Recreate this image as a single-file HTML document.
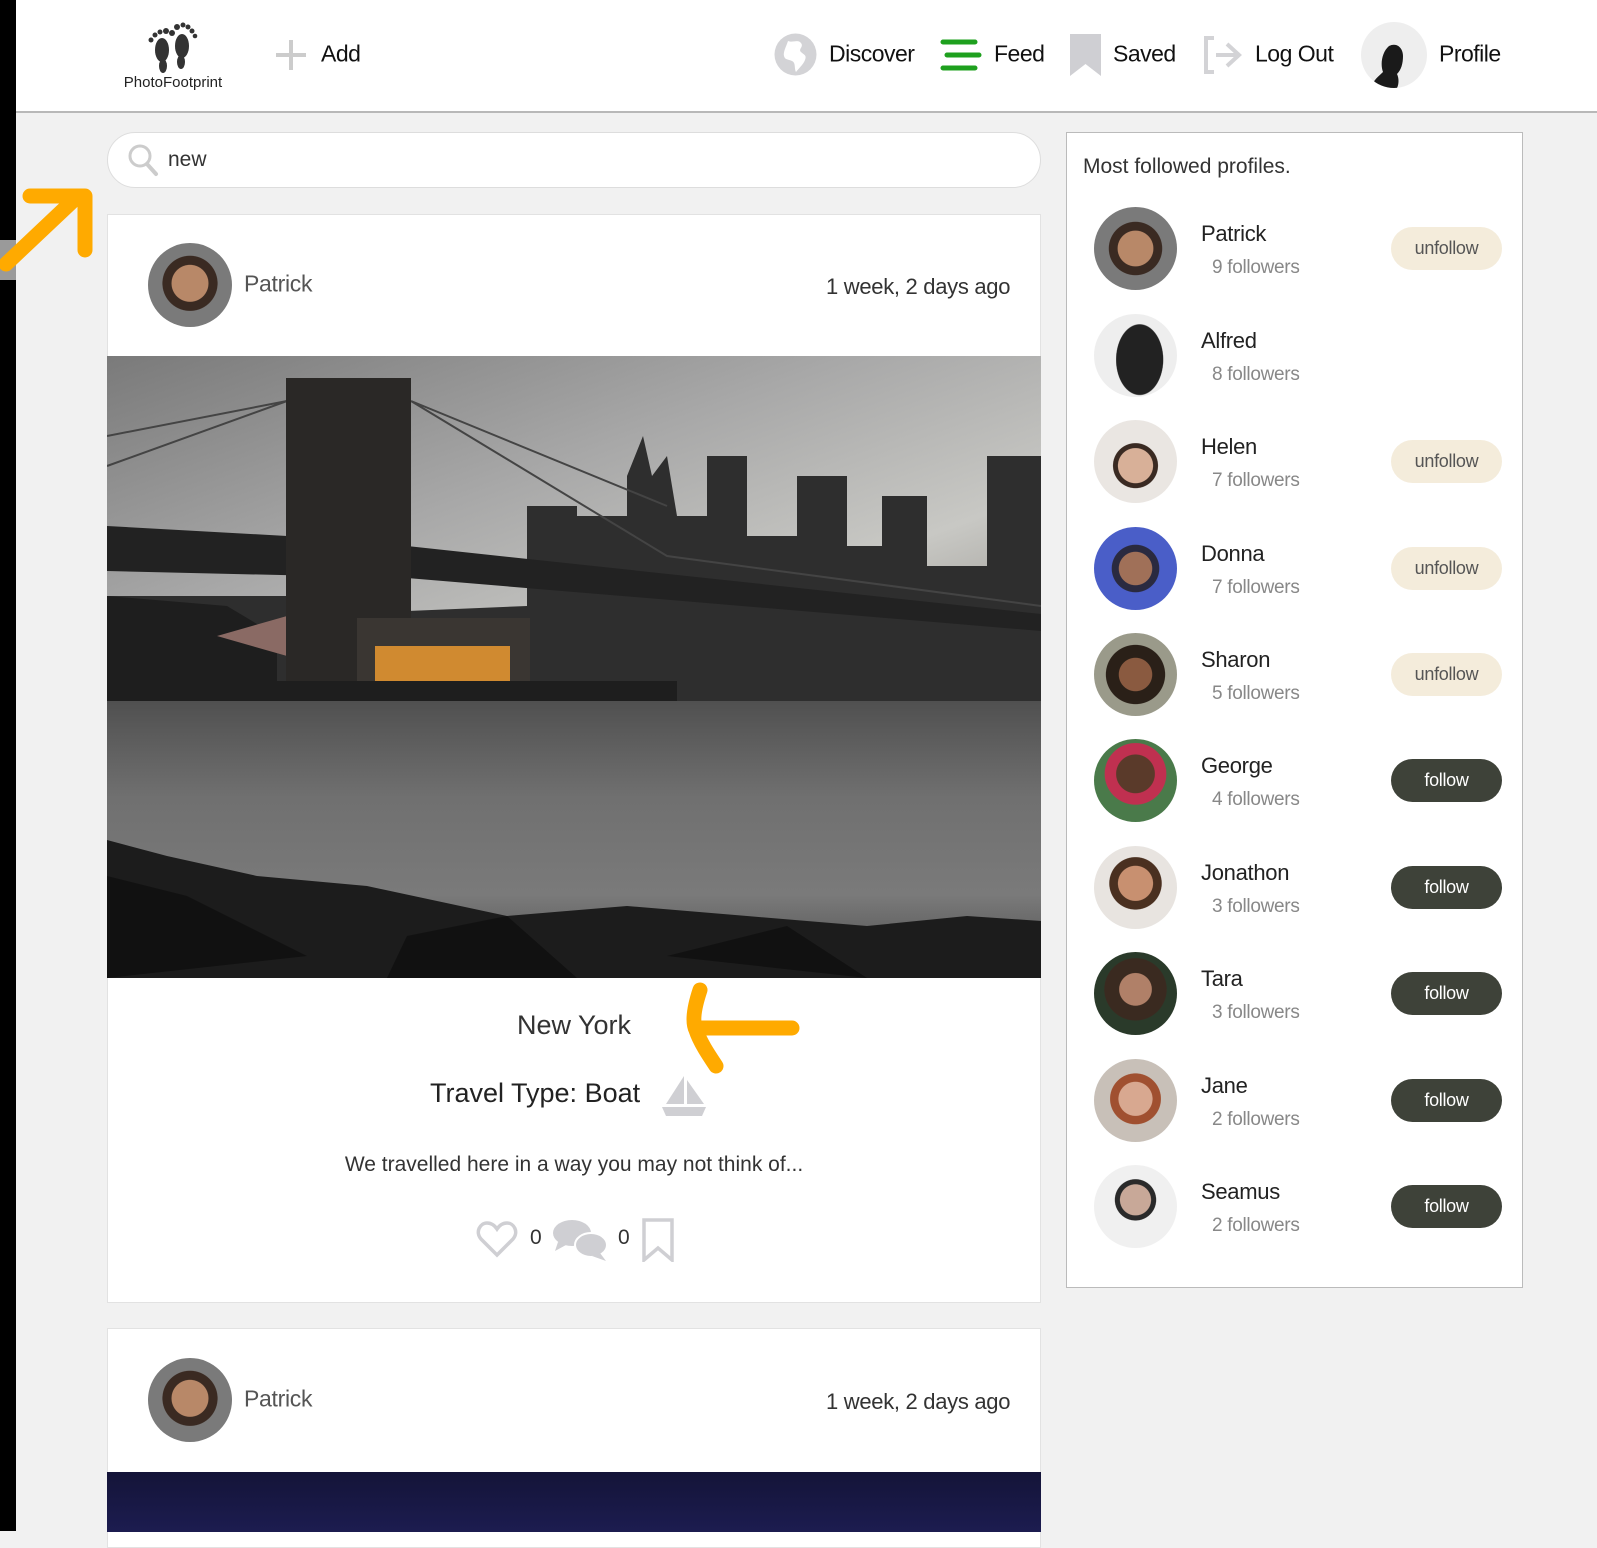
<!DOCTYPE html>
<html><head><meta charset="utf-8">
<style>
*{margin:0;padding:0;box-sizing:border-box}
body{width:1597px;height:1531px;overflow:hidden;background:#f1f1f1;font-family:"Liberation Sans",sans-serif;color:#222;position:relative}
.a{position:absolute}
.hdr{left:0;top:0;width:1597px;height:113px;background:#fff;border-bottom:2px solid #b8b8b8}
.nav{font-size:23px;color:#111;letter-spacing:-0.5px;transform:translateY(-50%);white-space:nowrap}
.card{background:#fff;border:1px solid #e2e2e2}
.av{border-radius:50%;overflow:hidden}
.name{font-size:22px;color:#222;letter-spacing:-0.3px;transform:translateY(-50%)}
.fol{font-size:19px;color:#888;letter-spacing:-0.3px;transform:translateY(-50%)}
.btn{width:111px;height:43px;border-radius:22px;font-size:18px;text-align:center;line-height:43px;letter-spacing:-0.3px}
.un{background:#f4ecdb;color:#555}
.fo{background:#3e4239;color:#fff}
</style></head><body>
<div class="a hdr"></div>
<div class="a" style="left:0;top:0;width:16px;height:1531px;background:#000;z-index:5"></div>
<div class="a" style="left:0;top:240px;width:16px;height:40px;background:#9a9a9a;z-index:5"></div>
<!-- logo -->
<svg class="a" style="left:146px;top:20px" width="54" height="54" viewBox="0 0 54 54">
<g fill="#333">
<ellipse cx="16" cy="30" rx="7" ry="12"/><ellipse cx="17" cy="46" rx="4" ry="7"/>
<ellipse cx="36" cy="26" rx="7" ry="12"/><ellipse cx="35" cy="42" rx="4" ry="7"/>
<circle cx="5" cy="20" r="2.5"/><circle cx="9" cy="15" r="2.5"/><circle cx="14" cy="12" r="2.5"/><circle cx="20" cy="11" r="3"/><circle cx="26" cy="13" r="3"/>
<circle cx="31" cy="7" r="3"/><circle cx="37" cy="5" r="2.5"/><circle cx="42" cy="7" r="2.5"/><circle cx="46" cy="11" r="2.5"/><circle cx="49" cy="16" r="2.3"/>
</g></svg>
<div class="a" style="left:117px;top:74px;width:112px;text-align:center;font-size:15px;color:#222">PhotoFootprint</div>
<svg class="a" style="left:274px;top:38px" width="34" height="34"><path d="M17 2V32M2 17H32" stroke="#ccc" stroke-width="4"/></svg>
<div class="a nav" style="left:321px;top:54px">Add</div>
<svg class="a" style="left:774px;top:33px" width="43" height="43" viewBox="0 0 43 43"><circle cx="21.5" cy="21.5" r="21" fill="#d3d3d6"/><path d="M14 8c5 2 10-2 13 2s-3 6 0 9 6 3 4 8-7 9-9 12c-2-4 0-9-4-11s-7-1-8-5 2-9 4-15z" fill="#fff"/></svg>
<div class="a nav" style="left:829px;top:54px">Discover</div>
<svg class="a" style="left:939px;top:38px" width="43" height="34"><g stroke="#1ea01e" stroke-width="5" stroke-linecap="round"><path d="M4 4H36M8 17H40M4 30H36"/></g></svg>
<div class="a nav" style="left:994px;top:54px">Feed</div>
<svg class="a" style="left:1069px;top:33px" width="33" height="43"><path d="M1 1H32V43L16.5 31 1 43z" fill="#cfcfd3"/></svg>
<div class="a nav" style="left:1113px;top:54px">Saved</div>
<svg class="a" style="left:1202px;top:35px" width="42" height="40"><path d="M12 3H4V37H12" fill="none" stroke="#d3d3d6" stroke-width="4"/><path d="M14 20H35M25 9L37 20 25 31" fill="none" stroke="#d3d3d6" stroke-width="4"/></svg>
<div class="a nav" style="left:1255px;top:54px">Log Out</div>
<div class="a av" style="left:1361px;top:22px;width:66px;height:66px;background:#eee"><svg width="66" height="66"><path d="M10 66c2-8 8-12 12-16-3-8-1-20 6-26 8-4 14 2 14 10 0 8-2 14-6 18 2 4 2 10 0 14z" fill="#1a1a1a"/></svg></div>
<div class="a nav" style="left:1439px;top:54px">Profile</div>

<!-- search -->
<div class="a" style="left:107px;top:132px;width:934px;height:56px;background:#fff;border:1px solid #ddd;border-radius:28px"></div>
<svg class="a" style="left:127px;top:143px" width="32" height="34"><circle cx="13" cy="13" r="10" fill="none" stroke="#ccc" stroke-width="3"/><path d="M20 21L29 31" stroke="#ccc" stroke-width="4" stroke-linecap="round"/></svg>
<div class="a" style="left:168px;top:148px;font-size:21px;color:#333">new</div>

<!-- arrow 1 -->
<svg class="a" style="left:0;top:188px;z-index:6" width="96" height="92"><path d="M6 76L78 8M30 8H85V62" fill="none" stroke="#ffaa00" stroke-width="15" stroke-linecap="round" stroke-linejoin="round"/></svg>

<!-- post card 1 -->
<div class="a card" style="left:107px;top:214px;width:934px;height:1089px"></div>
<div class="a av" style="left:148px;top:243px;width:84px;height:84px;background:radial-gradient(circle at 50% 48%,#b88868 0 30%,#3a2a22 31% 45%,#7a7a7a 46%)"></div>
<div class="a name" style="left:244px;top:284px;font-size:23px;color:#555">Patrick</div>
<div class="a name" style="left:826px;top:287px;font-size:22px;color:#333">1 week, 2 days ago</div>
<svg class="a" style="left:107px;top:356px" width="934" height="622" viewBox="0 0 934 622">
<defs><linearGradient id="sky" x1="0" y1="0" x2="1" y2="1"><stop offset="0" stop-color="#7a7a7a"/><stop offset=".4" stop-color="#a8a8a8"/><stop offset=".7" stop-color="#c8c8c4"/><stop offset="1" stop-color="#8a8680"/></linearGradient>
<linearGradient id="wat" x1="0" y1="0" x2="0" y2="1"><stop offset="0" stop-color="#505050"/><stop offset=".35" stop-color="#707070"/><stop offset=".7" stop-color="#7a7a7a"/><stop offset="1" stop-color="#4a4a4a"/></linearGradient></defs>
<rect width="934" height="345" fill="url(#sky)"/>
<path d="M0 345V240H180V260L420 250V150L470 150V160H520V120L536 80L545 120L560 100L570 160H600V100H640V180H690V120H740V190H775V140H820V210H880V100H934V345z" fill="#2e2e2e"/>
<path d="M0 240L120 250L170 280V345H0z" fill="#1e1e1e"/>
<path d="M110 280L180 260V300z" fill="#8a6a64"/>
<path d="M0 110L180 45M304 45L560 200L934 250M0 80L180 45M304 45L560 150" stroke="#444" stroke-width="2" fill="none"/>
<path d="M0 170L180 180L300 190L934 258V275L300 222L0 215z" fill="#222"/>
<rect x="179" y="22" width="125" height="303" fill="#2a2826"/>
<rect x="250" y="262" width="173" height="68" fill="#3a3632"/>
<rect x="268" y="290" width="135" height="35" fill="#d08a30"/>
<rect x="0" y="325" width="570" height="22" fill="#1e1e1e"/>
<rect y="345" width="934" height="277" fill="url(#wat)"/>
<path d="M0 484L60 500L150 520L260 530L400 560L520 550L640 560L760 570L860 560L934 565V622H0z" fill="#1c1c1c"/>
<path d="M0 520L80 540L200 600L0 622z M300 580L400 560L470 622H280z M560 600L680 570L760 622z" fill="#111"/>
</svg>
<div class="a" style="left:107px;top:1010px;width:934px;text-align:center;font-size:27px;color:#333">New York</div>
<div class="a" style="left:430px;top:1078px;font-size:27px;color:#222">Travel Type: Boat</div>
<svg class="a" style="left:660px;top:1074px" width="48" height="44"><path d="M24 2V30H6z" fill="#cfcfd3"/><path d="M27 6L44 30H27z" fill="#cfcfd3"/><path d="M2 33H46L42 42H6z" fill="#cfcfd3"/></svg>
<div class="a" style="left:107px;top:1153px;width:934px;text-align:center;font-size:21px;color:#333">We travelled here in a way you may not think of...</div>
<svg class="a" style="left:476px;top:1220px" width="42" height="38"><path d="M21 35L5 19C-1 12 4 3 11 3c5 0 8 3 10 6 2-3 5-6 10-6 7 0 12 9 6 16z" fill="none" stroke="#cfcfd3" stroke-width="3.5"/></svg>
<div class="a" style="left:530px;top:1226px;font-size:21px;color:#333">0</div>
<svg class="a" style="left:552px;top:1218px" width="56" height="44"><ellipse cx="20" cy="15" rx="19" ry="13" fill="#cfcfd3"/><path d="M6 24L3 33 14 27z" fill="#cfcfd3"/><ellipse cx="39" cy="27" rx="16" ry="12" fill="#cfcfd3" stroke="#fff" stroke-width="2"/><path d="M48 35L54 43 40 38z" fill="#cfcfd3"/></svg>
<div class="a" style="left:618px;top:1226px;font-size:21px;color:#333">0</div>
<svg class="a" style="left:642px;top:1218px" width="32" height="44"><path d="M2 2H30V42L16 30 2 42z" fill="none" stroke="#cfcfd3" stroke-width="3.5"/></svg>

<!-- arrow 2 -->
<svg class="a" style="left:672px;top:982px" width="130" height="96"><path d="M120 46H24M28 8C22 26 20 40 24 48 28 60 36 72 44 84" fill="none" stroke="#ffaa00" stroke-width="15" stroke-linecap="round" stroke-linejoin="round"/></svg>

<!-- post card 2 -->
<div class="a card" style="left:107px;top:1328px;width:934px;height:220px"></div>
<div class="a av" style="left:148px;top:1358px;width:84px;height:84px;background:radial-gradient(circle at 50% 48%,#b88868 0 30%,#3a2a22 31% 45%,#7a7a7a 46%)"></div>
<div class="a name" style="left:244px;top:1399px;font-size:23px;color:#555">Patrick</div>
<div class="a name" style="left:826px;top:1402px;font-size:22px;color:#333">1 week, 2 days ago</div>
<div class="a" style="left:107px;top:1472px;width:934px;height:60px;background:linear-gradient(#141438,#1c1c50)"></div>

<!-- sidebar -->
<div class="a" style="left:1066px;top:132px;width:457px;height:1156px;background:#fff;border:1px solid #bbb"></div>
<div class="a" style="left:1083px;top:155px;font-size:21px;color:#333">Most followed profiles.</div>

<div class="a av" style="left:1094px;top:207px;width:83px;height:83px;background:radial-gradient(circle at 50% 50%,#b88868 0 30%,#3a2a22 31% 45%,#7a7a7a 46%)"></div>
<div class="a name" style="left:1201px;top:234px">Patrick</div><div class="a fol" style="left:1212px;top:268px">9 followers</div>
<div class="a btn un" style="left:1391px;top:227px">unfollow</div>

<div class="a av" style="left:1094px;top:314px;width:83px;height:83px;background:radial-gradient(ellipse 40% 60% at 55% 55%,#222 0 70%,#eee 72%)"></div>
<div class="a name" style="left:1201px;top:341px">Alfred</div><div class="a fol" style="left:1212px;top:375px">8 followers</div>

<div class="a av" style="left:1094px;top:420px;width:83px;height:83px;background:radial-gradient(circle at 50% 55%,#d8b098 0 28%,#3a2a22 29% 36%,#eae6e2 37%)"></div>
<div class="a name" style="left:1201px;top:447px">Helen</div><div class="a fol" style="left:1212px;top:481px">7 followers</div>
<div class="a btn un" style="left:1391px;top:440px">unfollow</div>

<div class="a av" style="left:1094px;top:527px;width:83px;height:83px;background:radial-gradient(circle at 50% 50%,#a07058 0 28%,#2a2a40 29% 40%,#4a5ec8 41%)"></div>
<div class="a name" style="left:1201px;top:554px">Donna</div><div class="a fol" style="left:1212px;top:588px">7 followers</div>
<div class="a btn un" style="left:1391px;top:547px">unfollow</div>

<div class="a av" style="left:1094px;top:633px;width:83px;height:83px;background:radial-gradient(circle at 50% 50%,#8a5a40 0 28%,#2a2018 29% 50%,#9a9a8a 51%)"></div>
<div class="a name" style="left:1201px;top:660px">Sharon</div><div class="a fol" style="left:1212px;top:694px">5 followers</div>
<div class="a btn un" style="left:1391px;top:653px">unfollow</div>

<div class="a av" style="left:1094px;top:739px;width:83px;height:83px;background:radial-gradient(circle at 50% 42%,#5a3a2a 0 30%,#c03050 31% 48%,#4a7a4a 49%)"></div>
<div class="a name" style="left:1201px;top:766px">George</div><div class="a fol" style="left:1212px;top:800px">4 followers</div>
<div class="a btn fo" style="left:1391px;top:759px">follow</div>

<div class="a av" style="left:1094px;top:846px;width:83px;height:83px;background:radial-gradient(circle at 50% 45%,#c89070 0 28%,#4a3020 29% 42%,#e8e4e0 43%)"></div>
<div class="a name" style="left:1201px;top:873px">Jonathon</div><div class="a fol" style="left:1212px;top:907px">3 followers</div>
<div class="a btn fo" style="left:1391px;top:866px">follow</div>

<div class="a av" style="left:1094px;top:952px;width:83px;height:83px;background:radial-gradient(circle at 50% 45%,#b08068 0 26%,#3a2a20 27% 50%,#2a3a2a 51%)"></div>
<div class="a name" style="left:1201px;top:979px">Tara</div><div class="a fol" style="left:1212px;top:1013px">3 followers</div>
<div class="a btn fo" style="left:1391px;top:972px">follow</div>

<div class="a av" style="left:1094px;top:1059px;width:83px;height:83px;background:radial-gradient(circle at 50% 48%,#d8a890 0 28%,#a05030 29% 42%,#c8c0b8 43%)"></div>
<div class="a name" style="left:1201px;top:1086px">Jane</div><div class="a fol" style="left:1212px;top:1120px">2 followers</div>
<div class="a btn fo" style="left:1391px;top:1079px">follow</div>

<div class="a av" style="left:1094px;top:1165px;width:83px;height:83px;background:radial-gradient(circle at 50% 42%,#c8a898 0 24%,#2a2a2a 25% 32%,#f0f0f0 33%)"></div>
<div class="a name" style="left:1201px;top:1192px">Seamus</div><div class="a fol" style="left:1212px;top:1226px">2 followers</div>
<div class="a btn fo" style="left:1391px;top:1185px">follow</div>
</body></html>
